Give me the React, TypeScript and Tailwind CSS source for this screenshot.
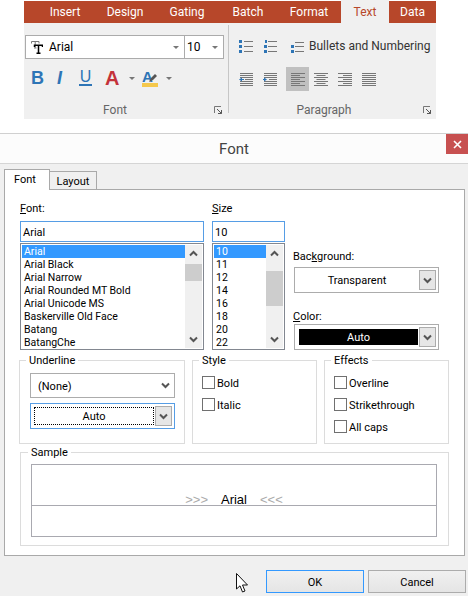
import { ReactNode } from 'react';

const fontNames = ['Arial', 'Arial Black', 'Arial Narrow', 'Arial Rounded MT Bold', 'Arial Unicode MS', 'Baskerville Old Face', 'Batang', 'BatangChe'];
const sizes = ['10', '11', '12', '14', '16', '18', '20', '22'];

function Chevron({ up = false }: { up?: boolean }) {
  return (
    <svg width="9" height="7" viewBox="0 0 9 7" className={up ? 'rotate-180' : ''}>
      <path d="M1 1.5 L4.5 5 L8 1.5" fill="none" stroke="#555" strokeWidth="2" />
    </svg>
  );
}

function Caret() {
  return <div className="w-0 h-0 border-x-[3px] border-t-[3px] border-x-transparent border-t-[#777]" />;
}

function Launcher({ className }: { className: string }) {
  return (
    <svg width="8" height="8" viewBox="0 0 8 8" className={className}>
      <path d="M0.5 7V0.5H7" fill="none" stroke="#777" />
      <path d="M3 3L7.5 7.5M7.5 4V7.5H4" fill="none" stroke="#555" />
    </svg>
  );
}

function TypeIcon() {
  return (
    <svg width="12" height="13" viewBox="0 0 12 13" className="shrink-0">
      <path d="M0.5 2.5V0.5H8V2.5M4.2 0.5V7M3 7H5.5" fill="none" stroke="#777" />
      <path d="M3.5 6V4.2H11.5V6M7.5 4.2V12M5.5 12.2H9.5" fill="none" stroke="#000" strokeWidth="1.5" />
    </svg>
  );
}

function Lines({ rows, color = '#777', x = 0, w = 14 }: { rows: number[]; color?: string; x?: number; w?: number }) {
  return (
    <>
      {rows.map((y) => (
        <rect key={y} x={x} y={y} width={w} height="1" fill={color} />
      ))}
    </>
  );
}

function BulletIcon() {
  return (
    <svg width="14" height="13" viewBox="0 0 14 13">
      <rect x="0" y="0" width="3" height="3" fill="#2e75b6" />
      <rect x="0" y="5" width="3" height="3" fill="#2e75b6" />
      <rect x="0" y="10" width="3" height="3" fill="#2e75b6" />
      <Lines rows={[1, 6, 11]} x={5} w={9} />
    </svg>
  );
}

function NumberIcon({ small = false }: { small?: boolean }) {
  return (
    <svg width="13" height="13" viewBox="0 0 13 13">
      {!small && <rect x="1" y="0" width="2" height="3" fill="#2e75b6" />}
      <rect x="0" y="5" width="3" height="3" fill="#2e75b6" />
      <rect x="0" y="10" width="3" height="3" fill="#2e75b6" />
      <Lines rows={small ? [2, 6, 11] : [1, 6, 11]} x={4} w={9} />
    </svg>
  );
}

function IndentIcon({ dir }: { dir: 'left' | 'right' }) {
  return (
    <svg width="14" height="13" viewBox="0 0 14 13">
      <Lines rows={[0, 2, 4, 8, 10, 12]} x={1} w={13} />
      <rect x="6" y="6" width="8" height="1" fill="#777" />
      <path d={dir === 'left' ? 'M0 6.5L3 4.5V8.5Z' : 'M4 6.5L1 4.5V8.5Z'} fill="#2e75b6" />
      <rect x={dir === 'left' ? 2 : 0} y="6" width="3" height="1" fill="#2e75b6" />
    </svg>
  );
}

function AlignIcon({ mode }: { mode: 'left' | 'center' | 'right' | 'justify' }) {
  const short = mode === 'justify' ? 14 : 9;
  const sx = mode === 'left' || mode === 'justify' ? 0 : mode === 'center' ? 2.5 : 5;
  return (
    <svg width="14" height="13" viewBox="0 0 14 13">
      {[0, 4, 8, 12].map((y) => (
        <rect key={y} x="0" y={y} width="14" height="1" fill="#777" />
      ))}
      {[2, 6, 10].map((y) => (
        <rect key={y} x={sx} y={y} width={short} height="1" fill="#777" />
      ))}
    </svg>
  );
}

function ScrollBar({ gap, thumb }: { gap: string; thumb: string }) {
  return (
    <div className="w-[17px] bg-[#f0f0f0] flex flex-col">
      <div className="h-[17px] flex items-center justify-center"><Chevron up /></div>
      <div className={`${gap} ${thumb} bg-[#cdcdcd]`} />
      <div className="flex-1" />
      <div className="h-[17px] flex items-center justify-center"><Chevron /></div>
    </div>
  );
}

function ListBox({ items, rowWidth, gap, thumb }: { items: string[]; rowWidth: string; gap: string; thumb: string }) {
  return (
    <div className="mt-px h-[107px] border border-[#828790] bg-white p-px flex overflow-hidden">
      <div className={`${rowWidth} text-[10.5px]`}>
        {items.map((item, i) => (
          <div key={item} className={`h-[13px] leading-[13px] pl-[2px] whitespace-nowrap ${i === 0 ? 'bg-[#3399ff] text-white' : ''}`}>
            {item}
          </div>
        ))}
      </div>
      <div className="flex-1" />
      <ScrollBar gap={gap} thumb={thumb} />
    </div>
  );
}

function DropButton() {
  return (
    <div className="w-[17px] h-[20px] border border-[#acacac] bg-[#e6e6e6] flex items-center justify-center">
      <Chevron />
    </div>
  );
}

function Group({ title, className, legendClass = 'ml-[6px]', bodyClass, children }: { title: string; className: string; legendClass?: string; bodyClass: string; children: ReactNode }) {
  return (
    <fieldset className={`border border-[#dcdcdc] ${className}`}>
      <legend className={`${legendClass} px-[3px] h-[14px] leading-[16px]`}>{title}</legend>
      <div className={bodyClass}>{children}</div>
    </fieldset>
  );
}

function Check({ label }: { label: string }) {
  return (
    <div className="h-[22px] flex items-start gap-[2px]">
      <div className="w-[13px] h-[13px] border border-[#707070] bg-white" />
      <span className="leading-[15px]">{label}</span>
    </div>
  );
}

function Ribbon() {
  const tabs = [
    ['Insert', 'w-[60px]'],
    ['Design', 'w-[60px]'],
    ['Gating', 'w-[64px]'],
    ['Batch', 'w-[58px]'],
    ['Format', 'w-[64px]'],
  ];
  return (
    <div className="ml-[24px] mt-px w-[412px] h-[118px] bg-[#f0f0f0] text-[12px] text-[#444]">
      <div className="h-[22px] bg-[#b7472a] flex text-white pl-[11px] leading-[22px]">
        {tabs.map(([name, w]) => (
          <div key={name} className={`${w} text-center`}>{name}</div>
        ))}
        <div className="w-[48px] -mt-px h-[23px] bg-[#f0f0f0] text-[#b7472a] text-center leading-[24px]">Text</div>
        <div className="flex-1 text-center">Data</div>
      </div>
      <div className="flex h-[96px]">
        <div className="w-[205px] shrink-0 h-[88px] mt-[2px] border-r border-[#c6c6c6] relative">
          <div className="mt-[10px] ml-px flex h-[24px] w-[200px]">
            <div className="w-[160px] border border-[#ababab] bg-white flex items-center pl-[5px] text-black">
              <TypeIcon />
              <span className="ml-[6px] flex-1">Arial</span>
              <div className="mr-[5px]"><Caret /></div>
            </div>
            <div className="w-[40px] -ml-px border border-[#ababab] bg-white flex items-center pl-[2px] text-black">
              <span className="flex-1">10</span>
              <div className="mr-[5px]"><Caret /></div>
            </div>
          </div>
          <div className="ml-[7px] mt-[9px] flex items-center h-[20px] font-['Liberation_Sans']">
            <span className="w-[20px] text-[18px] font-bold text-[#2e75b6] leading-none">B</span>
            <span className="ml-[6px] w-[14px] text-[18px] font-bold italic text-[#2e75b6] leading-none">I</span>
            <span className="ml-[8px] w-[13px] text-[16px] text-[#2e75b6] leading-[14px] border-b-2 border-[#2e75b6] text-center">U</span>
            <span className="ml-[13px] w-[16px] text-[20px] font-bold text-[#c4323a] leading-none">A</span>
            <div className="ml-[8px]"><Caret /></div>
            <div className="ml-[7px] w-[16px] h-[17px] relative">
              <span className="block text-[15px] font-bold text-[#2e75b6] leading-[13px]">A</span>
              <div className="h-[4px] bg-[#f5c84c]" />
              <svg width="9" height="9" viewBox="0 0 9 9" className="absolute right-0 top-[3px]">
                <path d="M0 9L2 5L6 1L8 3L4 7Z" fill="#555" />
              </svg>
            </div>
            <div className="ml-[8px]"><Caret /></div>
          </div>
          <div className="absolute left-0 right-0 bottom-[-5px] pr-[22px] text-center leading-[16px] text-[#666]">Font</div>
          <Launcher className="absolute right-[6px] bottom-[-1px]" />
        </div>
        <div className="flex-1 min-w-0 relative">
          <div className="mt-[16px] ml-[10px] flex items-center h-[14px]">
            <BulletIcon />
            <div className="ml-[11px]"><NumberIcon /></div>
            <div className="ml-[14px]"><NumberIcon small /></div>
            <span className="ml-[5px] whitespace-nowrap text-[#333]">Bullets and Numbering</span>
          </div>
          <div className="mt-[14px] ml-[10px] flex items-center h-[24px]">
            <IndentIcon dir="left" />
            <div className="ml-[10px]"><IndentIcon dir="right" /></div>
            <div className="ml-[9px] w-[23px] h-[24px] bg-[#c0c0c0] flex items-center justify-center"><AlignIcon mode="left" /></div>
            <div className="ml-[5px]"><AlignIcon mode="center" /></div>
            <div className="ml-[10px]"><AlignIcon mode="right" /></div>
            <div className="ml-[10px]"><AlignIcon mode="justify" /></div>
          </div>
          <div className="absolute left-0 right-0 bottom-px pr-[17px] text-center leading-[16px] text-[#666]">Paragraph</div>
          <Launcher className="absolute right-[5px] bottom-[5px]" />
        </div>
      </div>
    </div>
  );
}

function FontDialog() {
  return (
    <div className="mt-[14px] h-[463px] border-t border-[#d0d0d0] bg-[#f0f0f0] text-[11px] text-black">
      <div className="h-[30px] bg-[#fcfcfc] border-b border-[#d5d5d5] relative text-center text-[15px] leading-[30px] text-[#444]">
        Font
        <div className="absolute right-0 top-0 w-[22px] h-[20px] bg-[#c75050] flex items-center justify-center">
          <svg width="9" height="9" viewBox="0 0 9 9">
            <path d="M1 1L8 8M8 1L1 8" stroke="#fff" strokeWidth="1.6" />
          </svg>
        </div>
      </div>
      <div className="pl-[4px] flex items-end h-[25px]">
        <div className="relative z-10 -mb-px w-[46px] h-[21px] border border-b-0 border-[#a9a9a9] bg-white pl-[9px] leading-[19px]">Font</div>
        <div className="-ml-px w-[48px] h-[18px] border border-b-0 border-[#a9a9a9] bg-[#f0f0f0] text-center leading-[20px]">Layout</div>
      </div>
      <div className="mx-[4px] w-[461px] h-[367px] border border-[#a9a9a9] bg-white pl-[15px] pt-[11px]">
        <div className="flex gap-[8px]">
          <div className="w-[184px]">
            <div className="h-[20px] leading-[16px]"><span className="underline">F</span>ont:</div>
            <div className="h-[21px] border border-[#569de5] pl-[2px] leading-[21px]">Arial</div>
            <ListBox items={fontNames} rowWidth="w-[163px]" gap="mt-[2px]" thumb="h-[17px]" />
          </div>
          <div className="w-[73px]">
            <div className="h-[20px] leading-[16px]"><span className="underline">S</span>ize</div>
            <div className="h-[21px] border border-[#569de5] pl-[2px] leading-[21px]">10</div>
            <ListBox items={sizes} rowWidth="w-[52px]" gap="mt-[9px]" thumb="h-[35px]" />
          </div>
          <div className="w-[146px] pt-[48px] pl-px">
            <div className="-ml-px h-[18px] leading-[16px]">Bac<span className="underline">k</span>ground:</div>
            <div className="w-[145px] h-[26px] border border-[#acacac] flex items-center pr-[2px]">
              <div className="flex-1 text-center pt-[2px]">Transparent</div>
              <DropButton />
            </div>
            <div className="-ml-px mt-[16px] h-[15px] leading-[16px]"><span className="underline">C</span>olor:</div>
            <div className="w-[145px] h-[26px] border border-[#acacac] flex items-center pl-[4px] pr-[2px]">
              <div className="flex-1 h-[16px] bg-black text-white text-center leading-[18px] mr-px">Auto</div>
              <DropButton />
            </div>
          </div>
        </div>
        <div className="-ml-px mt-[3px] flex gap-[7px]">
          <Group title="Underline" className="w-[166px] h-[91px]" bodyClass="pl-[10px]">
            <div className="mt-[6px] w-[145px] h-[25px] border border-[#acacac] flex items-center pl-[7px] pr-[4px]">
              <span className="flex-1 pt-[4px]">(None)</span>
              <Chevron />
            </div>
            <div className="mt-[5px] w-[145px] h-[26px] border border-[#569de5] flex items-center pl-[3px] pr-[2px]">
              <div className="w-[121px] h-[18px] border border-dotted border-black text-center leading-[18px] mr-px">Auto</div>
              <DropButton />
            </div>
          </Group>
          <Group title="Style" className="w-[125px] h-[91px]" bodyClass="pl-[9px] pt-[9px]">
            <Check label="Bold" />
            <Check label="Italic" />
          </Group>
          <Group title="Effects" className="w-[125px] h-[91px]" bodyClass="pl-[9px] pt-[9px]">
            <Check label="Overline" />
            <Check label="Strikethrough" />
            <Check label="All caps" />
          </Group>
        </div>
        <Group title="Sample" className="w-[429px] h-[101px] mt-px" legendClass="ml-[7px]" bodyClass="pl-[10px]">
          <div className="mt-[5px] w-[406px] h-[73px] border border-[#a9a9b0]">
            <div className="h-[41px] border-b border-[#a9a9b0] flex items-end justify-center overflow-hidden font-['Liberation_Sans'] text-[13px] leading-[10px]">
              <span className="text-[#aaa]">&gt;&gt;&gt;</span>
              <span className="mx-[13px]">Arial</span>
              <span className="text-[#aaa]">&lt;&lt;&lt;</span>
            </div>
          </div>
        </Group>
      </div>
      <div className="mt-[14px] pl-[266px] flex gap-[4px] relative">
        <div className="w-[98px] h-[23px] border border-[#3399ff] bg-gradient-to-b from-[#f0f0f0] to-[#e5e5e5] text-center leading-[23px]">OK</div>
        <div className="w-[98px] h-[23px] border border-[#acacac] bg-gradient-to-b from-[#f0f0f0] to-[#e5e5e5] text-center leading-[23px]">Cancel</div>
        <svg width="13" height="20" viewBox="0 0 13 20" className="absolute left-[236px] top-[3px]">
          <path d="M0.5 0.5V16L4 12.8L6.5 19L9 18L6.5 12H11.5Z" fill="#fff" stroke="#111" />
        </svg>
      </div>
    </div>
  );
}

export default function App() {
  return (
    <div className="w-[468px] h-[596px] overflow-hidden bg-white font-['Roboto',sans-serif]">
      <Ribbon />
      <FontDialog />
    </div>
  );
}
